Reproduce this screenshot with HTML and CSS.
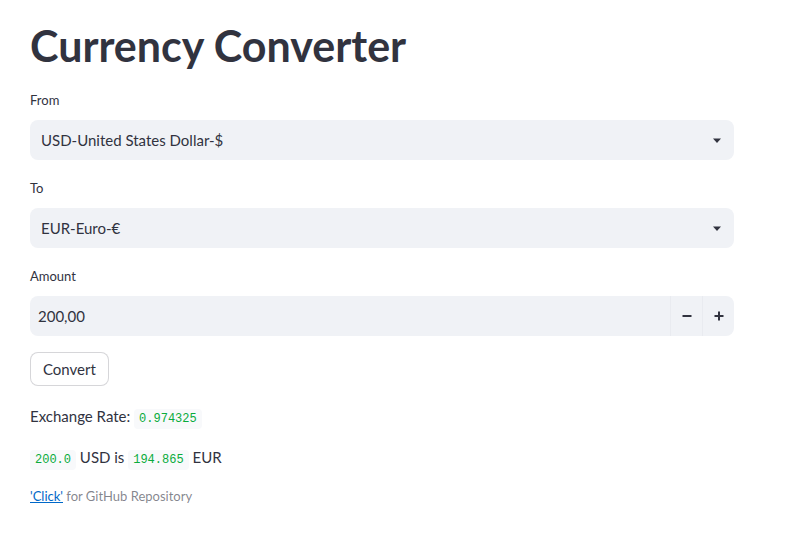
FILE: index.html
```html
<!DOCTYPE html>
<html lang="en">
<head>
<meta charset="utf-8">
<title>Currency Converter</title>
<link rel="stylesheet" href="styles.css">
</head>
<body>
<main class="app">
  <h1 class="title">Currency Converter</h1>

  <div class="field">
    <label class="label">From</label>
    <div class="select">
      <span class="select-value">USD-United States Dollar-$</span>
      <svg class="caret" width="10" height="6" viewBox="0 0 10 6"><path d="M1 0.5h8L5 5z" fill="#31333f"/></svg>
    </div>
  </div>

  <div class="field">
    <label class="label">To</label>
    <div class="select">
      <span class="select-value">EUR-Euro-€</span>
      <svg class="caret" width="10" height="6" viewBox="0 0 10 6"><path d="M1 0.5h8L5 5z" fill="#31333f"/></svg>
    </div>
  </div>

  <div class="field">
    <label class="label">Amount</label>
    <div class="number">
      <span class="number-value">200,00</span>
      <button class="step" type="button">
        <svg width="10" height="10" viewBox="0 0 10 10"><rect x="0.5" y="4" width="9" height="2" fill="#31333f"/></svg>
      </button>
      <button class="step" type="button">
        <svg width="10" height="10" viewBox="0 0 10 10"><rect x="0.5" y="4" width="9" height="2" fill="#31333f"/><rect x="4" y="0.5" width="2" height="9" fill="#31333f"/></svg>
      </button>
    </div>
  </div>

  <button class="btn" type="button">Convert</button>

  <p class="line">Exchange Rate: <code class="code">0.974325</code></p>
  <p class="line line-2"><code class="code">200.0</code> USD is <code class="code">194.865</code> EUR</p>
  <p class="caption"><a class="link" href="#">'Click'</a> for GitHub Repository</p>
</main>
</body>
</html>
```

FILE: styles.css
```css
* { box-sizing: border-box; }
html, body { margin: 0; padding: 0; background: #fff; }
body {
  font-family: Lato, "Noto Sans", sans-serif;
  color: #31333f;
  font-size: 15px;
}
.app {
  width: 764px;
  padding: 19px 0 0 30px;
  display: flex;
  flex-direction: column;
  align-items: flex-start;
}
.title {
  margin: 0;
  font-size: 43px;
  line-height: 53px;
  font-weight: 700;
}
.field {
  width: 704px;
  margin-top: 18px;
  display: flex;
  flex-direction: column;
  gap: 10px;
}
.label {
  font-size: 13px;
  line-height: 20px;
}
.select, .number {
  height: 40px;
  background: #f0f2f6;
  border-radius: 8px;
  display: flex;
  align-items: center;
}
.select { padding: 0 12px 0 11px; justify-content: space-between; }
.caret { margin-top: 1px; }
.select-value, .number-value { font-size: 15px; }
.number { padding-left: 8px; }
.number-value { flex: 1; }
.step {
  width: 32px;
  height: 40px;
  border: 0;
  border-left: 1px solid #e9ebf0;
  background: transparent;
  display: flex;
  align-items: center;
  justify-content: center;
  padding: 0;
}
.btn {
  margin-top: 16px;
  height: 34px;
  padding: 0 12px;
  background: #fff;
  border: 1px solid rgba(49, 51, 63, 0.2);
  border-radius: 8px;
  font-family: inherit;
  font-size: 15px;
  color: #31333f;
}
.line {
  margin: 18px 0 0;
  font-size: 15px;
  line-height: 24px;
}
.line-2 { margin-top: 17px; }
.code {
  font-family: "Liberation Mono", "DejaVu Sans Mono", monospace;
  font-size: 12px;
  line-height: 1;
  color: #09ab3b;
  background: #f8f9fb;
  border-radius: 4px;
  padding: 3px 5px;
}
.caption {
  margin: 17px 0 0;
  font-size: 13px;
  line-height: 20px;
  color: rgba(49, 51, 63, 0.6);
}
.link { color: #0068c9; }
```
